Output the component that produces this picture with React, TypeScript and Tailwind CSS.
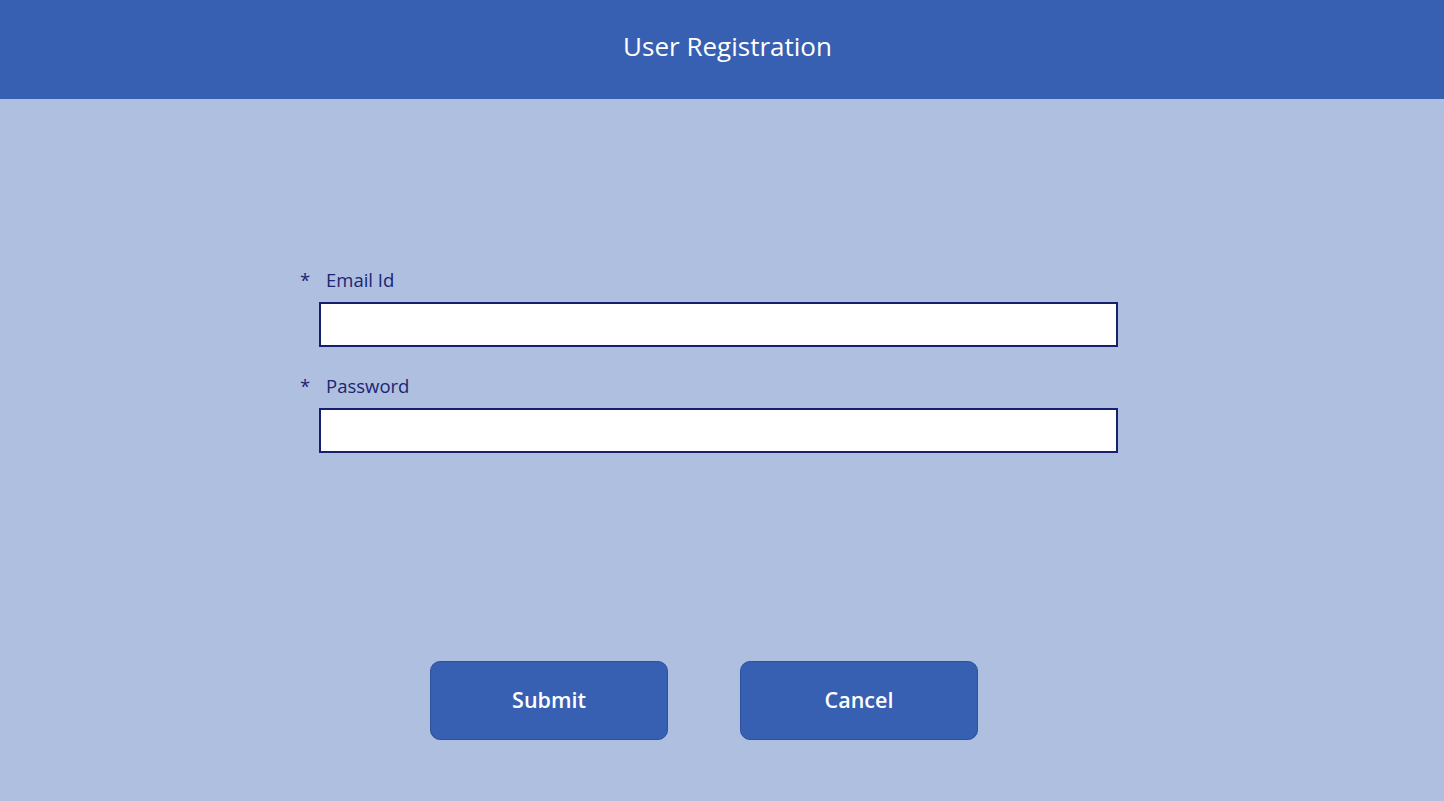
export default function App() {
  const labelCls = 'flex h-6 items-center text-[18.5px] leading-6 text-[#1c2570]';
  const inputCls = 'block h-[45px] w-[799px] border-2 border-[#16206e] bg-white px-2 text-[18px] outline-none';
  const btnCls =
    'flex h-[79px] w-[238px] items-center justify-center rounded-[10px] border border-[#2d519b] bg-[#3760b2] text-[21.5px] font-semibold text-white';

  return (
    <div className="min-h-[801px] bg-[#afbfe0] font-['Open_Sans',sans-serif]">
      <header className="flex h-[99px] items-center justify-center bg-[#3760b2] pb-[7px] pl-[11px]">
        <h1 className="text-[26px] text-white">User Registration</h1>
      </header>

      <main className="pl-[300px] pt-[169px]">
        <div className={labelCls}>
          <span className="w-[26px]">*</span>
          <span>Email Id</span>
        </div>
        <input type="email" className={`${inputCls} ml-[19px] mt-[10px]`} />

        <div className={`${labelCls} mt-[27px]`}>
          <span className="w-[26px]">*</span>
          <span>Password</span>
        </div>
        <input type="password" className={`${inputCls} ml-[19px] mt-[10px]`} />
      </main>

      <div className="mt-[208px] flex gap-[72px] pl-[430px]">
        <button className={btnCls}>Submit</button>
        <button className={btnCls}>Cancel</button>
      </div>
    </div>
  );
}
